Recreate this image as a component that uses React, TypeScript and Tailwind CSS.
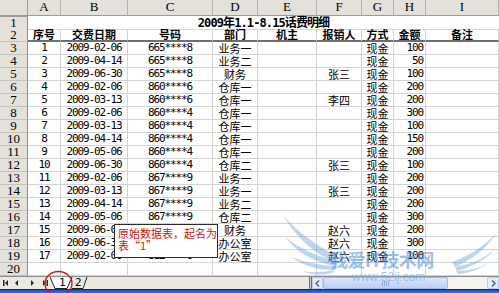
import React from "react";

const GRID = "grid grid-cols-[28px_33px_67px_85px_45px_59px_45px_32px_32px_1fr]";
const MONO = "font-[family-name:'DejaVu_Sans_Mono',monospace] tracking-[-1.1px] text-[11px]";
const CJK = "font-[family-name:'Noto_Sans_CJK_SC',sans-serif] text-[11px]";
const SERIF = "font-[family-name:'Liberation_Serif',serif]";
const HDR_BG = "bg-[#e3e1d9]";
const CELL = "h-full min-w-0 border-r border-b border-[#d4d4d4] flex items-center whitespace-nowrap leading-[12px]";

type Row = [number, string, string, string, string, number];

const rows: Row[] = [
  [1, "2009-02-06", "665****8", "业务一", "", 100],
  [2, "2009-04-14", "665****8", "业务二", "", 50],
  [3, "2009-06-30", "665****8", "财务", "张三", 100],
  [4, "2009-02-06", "860****6", "仓库一", "", 200],
  [5, "2009-03-13", "860****6", "仓库一", "李四", 200],
  [6, "2009-02-06", "860****4", "仓库一", "", 300],
  [7, "2009-03-13", "860****4", "仓库一", "", 100],
  [8, "2009-04-14", "860****4", "仓库一", "", 150],
  [9, "2009-05-06", "860****4", "仓库一", "", 200],
  [10, "2009-06-30", "860****4", "仓库二", "张三", 100],
  [11, "2009-02-06", "867****9", "业务一", "", 200],
  [12, "2009-03-13", "867****9", "业务一", "张三", 200],
  [13, "2009-04-14", "867****9", "业务二", "", 200],
  [14, "2009-05-06", "867****9", "仓库二", "", 300],
  [15, "2009-06-06", "812****6", "财务", "赵六", 200],
  [16, "2009-06-30", "812****6", "办公室", "赵六", 300],
  [17, "2009-02-06", "812****6", "办公室", "赵六", 100],
];

function RowHead({ n }: { n: number | string }) {
  return (
    <div className={`h-full ${HDR_BG} border-r border-b border-r-[#8e8e8e] border-b-[#c4c2ba] flex items-center justify-center ${SERIF} text-[13px] leading-[12px] text-black`}>
      {n}
    </div>
  );
}

function DataRow({ r }: { r: Row }) {
  const [seq, date, phone, dept, rep, amt] = r;
  return (
    <div className={`${GRID} h-[13px]`}>
      <RowHead n={seq + 2} />
      <div className={`${CELL} justify-center ${MONO}`}>{seq}</div>
      <div className={`${CELL} justify-center ${MONO}`}>{date}</div>
      <div className={`${CELL} justify-center ${MONO}`}>{phone}</div>
      <div className={`${CELL} justify-center ${CJK}`}>{dept}</div>
      <div className={CELL} />
      <div className={`${CELL} justify-center ${CJK}`}>{rep}</div>
      <div className={`${CELL} justify-center ${CJK}`}>现金</div>
      <div className={`${CELL} justify-end pr-[2px] ${MONO}`}>{amt}</div>
      <div className={CELL} />
      <div className={CELL} />
    </div>
  );
}

export default function App() {
  const letters = ["A", "B", "C", "D", "E", "F", "G", "H", "I"];
  const heads = ["序号", "交费日期", "号码", "部门", "机主", "报销人", "方式", "金额", "备注"];
  return (
    <div className="relative w-[499px] h-[293px] overflow-hidden bg-white text-black">
      <div className="flex flex-col">
        {/* column headers */}
        <div className={`${GRID} h-[17px]`}>
          <div className={`${HDR_BG} border-r border-b border-[#9a9a9a]`} />
          {letters.map((l) => (
            <div key={l} className={`${HDR_BG} border-r border-b border-r-[#b2b0a8] border-b-[#9a9a9a] flex items-center justify-center ${SERIF} text-[13px] leading-[14px]`}>
              {l}
            </div>
          ))}
          <div className={`${HDR_BG} border-b border-[#9a9a9a]`} />
        </div>
        {/* row 1 title */}
        <div className={`${GRID} h-[12px]`}>
          <RowHead n={1} />
          <div className="col-span-9 h-full border-b border-[#d4d4d4] flex items-center justify-center font-[family-name:'DejaVu_Sans_Mono','Noto_Sans_CJK_SC',monospace] text-[12px] font-bold tracking-[-0.9px] leading-[12px] whitespace-nowrap">
            2009年1.1-8.15话费明细
          </div>
        </div>
        {/* row 2 headers */}
        <div className={`${GRID} h-[13px]`}>
          <RowHead n={2} />
          {heads.map((h) => (
            <div key={h} className={`h-full border-r border-r-[#d4d4d4] border-b-2 border-b-[#6e6e6e] flex items-center justify-center ${CJK} font-bold leading-[11px] whitespace-nowrap`}>
              {h}
            </div>
          ))}
          <div className="h-full border-b-2 border-b-[#6e6e6e]" />
        </div>
        {rows.map((r) => (
          <DataRow key={r[0]} r={r} />
        ))}
        {/* row 20 empty */}
        <div className={`${GRID} h-[13px]`}>
          <RowHead n={20} />
          {Array.from({ length: 9 }).map((_, i) => (
            <div key={i} className={CELL} />
          ))}
          <div className={CELL} />
        </div>
        {/* tab bar */}
        <div className="flex h-[13px] bg-[#ebe9e1] border-t border-[#8c8c8c]">
          <div className="w-[50px] h-full">
            <svg width="50" height="12" viewBox="0 0 50 12">
              <rect x="3" y="3" width="1.5" height="6" fill="#2a2a2a" />
              <polygon points="8,3 8,9 5,6" fill="#2a2a2a" />
              <polygon points="18,3 18,9 15,6" fill="#2a2a2a" />
              <polygon points="31,3 31,9 34,6" fill="#2a2a2a" />
              <polygon points="43,3 43,9 46,6" fill="#2a2a2a" />
              <rect x="46.5" y="3" width="1.5" height="6" fill="#2a2a2a" />
            </svg>
          </div>
          <div className="relative w-[259px] h-full">
            <svg className="absolute left-0 top-0" width="60" height="12" viewBox="0 0 60 12">
              <line x1="22" y1="11.5" x2="33" y2="11.5" stroke="#222" strokeWidth="1" />
              <line x1="33" y1="11.5" x2="37" y2="0" stroke="#222" strokeWidth="1" />
              <polygon points="0,0 22,0 17,11.5 5,11.5" fill="#ffffff" />
              <line x1="0" y1="0" x2="5" y2="11.5" stroke="#222" strokeWidth="1" />
              <line x1="5" y1="11.5" x2="17" y2="11.5" stroke="#222" strokeWidth="1" />
              <line x1="17" y1="11.5" x2="22" y2="0" stroke="#222" strokeWidth="1" />
            </svg>
            <span className="absolute left-[9px] top-0 h-[12px] flex items-center font-[family-name:'DejaVu_Sans_Mono',monospace] text-[11px] leading-[12px]">1</span>
            <span className="absolute left-[25px] top-0 h-[12px] flex items-center font-[family-name:'DejaVu_Sans_Mono',monospace] text-[11px] leading-[12px]">2</span>
          </div>
          <div className="flex flex-1 h-full">
            <div className="w-[3px] h-full border-l border-r border-[#6e6e6e] bg-[#d4d0c8]" />
            <div className="w-[11px] h-full bg-[#e4ebf9] border border-[#bccbee] rounded-[2px] flex items-center justify-center">
              <svg width="5" height="7" viewBox="0 0 5 7">
                <polyline points="4,0.5 1,3.5 4,6.5" fill="none" stroke="#4d6185" strokeWidth="1.4" />
              </svg>
            </div>
            <div className="w-[125px] h-full bg-gradient-to-b from-[#dce6fb] to-[#bccff5] border border-[#a5bbe8] rounded-[2px] flex items-center justify-center gap-[1px]">
              <div className="w-[1px] h-[5px] bg-[#8ea6d8]" />
              <div className="w-[1px] h-[5px] bg-[#8ea6d8]" />
              <div className="w-[1px] h-[5px] bg-[#8ea6d8]" />
              <div className="w-[1px] h-[5px] bg-[#8ea6d8]" />
            </div>
            <div className="flex-1 h-full bg-[#f4f3ee]" />
            <div className="w-[12px] h-full bg-[#e4ebf9] border border-[#bccbee] rounded-[2px] flex items-center justify-center">
              <svg width="5" height="7" viewBox="0 0 5 7">
                <polyline points="1,0.5 4,3.5 1,6.5" fill="none" stroke="#4d6185" strokeWidth="1.4" />
              </svg>
            </div>
          </div>
        </div>
        {/* bottom blue band */}
        <div className="h-[4px] border-t border-[#0d2a6e] bg-gradient-to-b from-[#2452b8] to-[#3b6fd6]" />
      </div>

      {/* callout */}
      <div className="absolute left-[114px] top-[224px] w-[104px] h-[34px] bg-white border border-[#2b2b2b] pl-[3px] pt-[2px] font-[family-name:'Noto_Sans_CJK_SC',sans-serif] text-[11px] leading-[12px] text-[#c81414]">
        <div className="whitespace-nowrap">原始数据表，起名为</div>
        <div className="whitespace-nowrap">表“1”</div>
      </div>

      {/* red ellipse */}
      <svg className="absolute left-0 top-0 pointer-events-none" width="499" height="293" viewBox="0 0 499 293">
        <ellipse cx="58.5" cy="283.5" rx="13.5" ry="12" fill="none" stroke="#d01818" strokeWidth="1.3" />
      </svg>

      {/* watermark */}
      <svg className="absolute left-0 top-0 pointer-events-none opacity-45" width="499" height="293" viewBox="0 0 499 293">
        <g fill="#6fa6e0">
          <path d="M334 262 Q 302 248 283 215 Q 300 236 336 256 Z" />
          <path d="M335 266 Q 303 260 286 238 Q 306 254 337 261 Z" />
          <path d="M335 270 Q 308 270 292 257 Q 310 265 336 266 Z" />
          <path d="M333 273 Q 315 277 302 271 Q 316 274 334 270 Z" />
          <path d="M452 262 Q 480 252 497 232 Q 484 254 455 267 Z" />
          <path d="M455 267 Q 480 263 495 249 Q 482 264 457 271 Z" />
          <path d="M456 271 Q 476 271 488 263 Q 478 272 458 274 Z" />
        </g>
      </svg>
      <div className="absolute left-[330px] top-[249px] pointer-events-none font-[family-name:'Noto_Sans_CJK_SC',sans-serif] font-bold text-[18px] leading-[20px] text-[#4a8fdc] opacity-55 whitespace-nowrap tracking-[-0.5px]">
        我爱IT技术网
      </div>
      <div className="absolute left-[352px] top-[271px] pointer-events-none font-[family-name:'Liberation_Sans',sans-serif] text-[12px] leading-[12px] text-[#7fb0e4] opacity-70 whitespace-nowrap">
        www.52ij.com
      </div>
    </div>
  );
}
